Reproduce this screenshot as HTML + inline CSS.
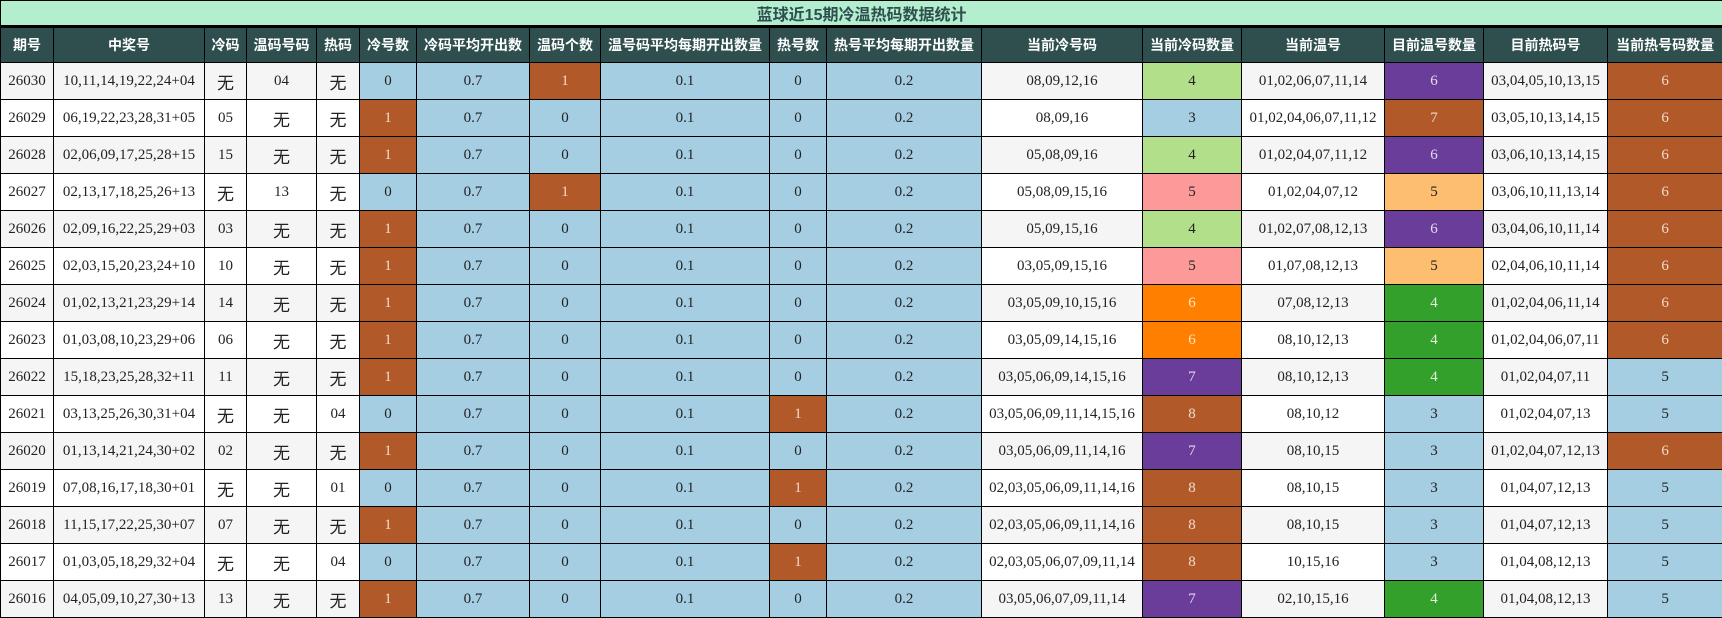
<!DOCTYPE html>
<html><head><meta charset="utf-8"><style>
*{margin:0;padding:0;box-sizing:border-box}
body{width:1722px;height:617px;background:#fff;overflow:hidden}
table{border-collapse:collapse;table-layout:fixed;width:1722px;font-family:"Liberation Serif","Noto Serif CJK SC",serif;font-size:15px;color:#222}
td,th{border:1.5px solid #000;text-align:center;white-space:nowrap;overflow:hidden}
.t td{height:25px;background:#b3eecf;color:#2f4f4f;font-weight:bold;font-family:"Liberation Sans","Noto Sans CJK SC",sans-serif;font-size:16px;border-bottom:3px solid #000}
th{height:36px;background:#2f4f4f;color:#fff;font-family:"Liberation Sans","Noto Sans CJK SC",sans-serif;font-size:14px;font-weight:bold}
tr.r td{height:37px}
tr.r:nth-child(odd) td{background:#f5f5f5}
tr.r:nth-child(even) td{background:#fff}
tr.r td.b{background:#a6cee3}
tr.r td.o{background:#b15928;color:#f3dcd0}
tr.r td.g{background:#b2df8a}
tr.r td.p{background:#6a3d9a;color:#e6dcf0}
tr.r td.k{background:#fb9a99}
tr.r td.l{background:#fdbf6f}
tr.r td.n{background:#ff7f00;color:#fde3c8}
tr.r td.G{background:#33a02c;color:#e0f2dc}
.w{font-family:"Noto Sans CJK SC",sans-serif;font-size:17px}
</style></head><body>
<table>
<colgroup><col style="width:53px"><col style="width:151px"><col style="width:42px"><col style="width:70px"><col style="width:43px"><col style="width:57px"><col style="width:113px"><col style="width:71px"><col style="width:169px"><col style="width:57px"><col style="width:155px"><col style="width:161px"><col style="width:99px"><col style="width:143px"><col style="width:99px"><col style="width:124px"><col style="width:115px"></colgroup>
<tbody>
<tr class="t"><td colspan="17">蓝球近15期冷温热码数据统计</td></tr>
<tr><th>期号</th><th>中奖号</th><th>冷码</th><th>温码号码</th><th>热码</th><th>冷号数</th><th>冷码平均开出数</th><th>温码个数</th><th>温号码平均每期开出数量</th><th>热号数</th><th>热号平均每期开出数量</th><th>当前冷号码</th><th>当前冷码数量</th><th>当前温号</th><th>目前温号数量</th><th>目前热码号</th><th>当前热号码数量</th></tr>
<tr class="r"><td>26030</td><td>10,11,14,19,22,24+04</td><td class="w">无</td><td>04</td><td class="w">无</td><td class="b">0</td><td class="b">0.7</td><td class="o">1</td><td class="b">0.1</td><td class="b">0</td><td class="b">0.2</td><td>08,09,12,16</td><td class="g">4</td><td>01,02,06,07,11,14</td><td class="p">6</td><td>03,04,05,10,13,15</td><td class="o">6</td></tr>
<tr class="r"><td>26029</td><td>06,19,22,23,28,31+05</td><td>05</td><td class="w">无</td><td class="w">无</td><td class="o">1</td><td class="b">0.7</td><td class="b">0</td><td class="b">0.1</td><td class="b">0</td><td class="b">0.2</td><td>08,09,16</td><td class="b">3</td><td>01,02,04,06,07,11,12</td><td class="o">7</td><td>03,05,10,13,14,15</td><td class="o">6</td></tr>
<tr class="r"><td>26028</td><td>02,06,09,17,25,28+15</td><td>15</td><td class="w">无</td><td class="w">无</td><td class="o">1</td><td class="b">0.7</td><td class="b">0</td><td class="b">0.1</td><td class="b">0</td><td class="b">0.2</td><td>05,08,09,16</td><td class="g">4</td><td>01,02,04,07,11,12</td><td class="p">6</td><td>03,06,10,13,14,15</td><td class="o">6</td></tr>
<tr class="r"><td>26027</td><td>02,13,17,18,25,26+13</td><td class="w">无</td><td>13</td><td class="w">无</td><td class="b">0</td><td class="b">0.7</td><td class="o">1</td><td class="b">0.1</td><td class="b">0</td><td class="b">0.2</td><td>05,08,09,15,16</td><td class="k">5</td><td>01,02,04,07,12</td><td class="l">5</td><td>03,06,10,11,13,14</td><td class="o">6</td></tr>
<tr class="r"><td>26026</td><td>02,09,16,22,25,29+03</td><td>03</td><td class="w">无</td><td class="w">无</td><td class="o">1</td><td class="b">0.7</td><td class="b">0</td><td class="b">0.1</td><td class="b">0</td><td class="b">0.2</td><td>05,09,15,16</td><td class="g">4</td><td>01,02,07,08,12,13</td><td class="p">6</td><td>03,04,06,10,11,14</td><td class="o">6</td></tr>
<tr class="r"><td>26025</td><td>02,03,15,20,23,24+10</td><td>10</td><td class="w">无</td><td class="w">无</td><td class="o">1</td><td class="b">0.7</td><td class="b">0</td><td class="b">0.1</td><td class="b">0</td><td class="b">0.2</td><td>03,05,09,15,16</td><td class="k">5</td><td>01,07,08,12,13</td><td class="l">5</td><td>02,04,06,10,11,14</td><td class="o">6</td></tr>
<tr class="r"><td>26024</td><td>01,02,13,21,23,29+14</td><td>14</td><td class="w">无</td><td class="w">无</td><td class="o">1</td><td class="b">0.7</td><td class="b">0</td><td class="b">0.1</td><td class="b">0</td><td class="b">0.2</td><td>03,05,09,10,15,16</td><td class="n">6</td><td>07,08,12,13</td><td class="G">4</td><td>01,02,04,06,11,14</td><td class="o">6</td></tr>
<tr class="r"><td>26023</td><td>01,03,08,10,23,29+06</td><td>06</td><td class="w">无</td><td class="w">无</td><td class="o">1</td><td class="b">0.7</td><td class="b">0</td><td class="b">0.1</td><td class="b">0</td><td class="b">0.2</td><td>03,05,09,14,15,16</td><td class="n">6</td><td>08,10,12,13</td><td class="G">4</td><td>01,02,04,06,07,11</td><td class="o">6</td></tr>
<tr class="r"><td>26022</td><td>15,18,23,25,28,32+11</td><td>11</td><td class="w">无</td><td class="w">无</td><td class="o">1</td><td class="b">0.7</td><td class="b">0</td><td class="b">0.1</td><td class="b">0</td><td class="b">0.2</td><td>03,05,06,09,14,15,16</td><td class="p">7</td><td>08,10,12,13</td><td class="G">4</td><td>01,02,04,07,11</td><td class="b">5</td></tr>
<tr class="r"><td>26021</td><td>03,13,25,26,30,31+04</td><td class="w">无</td><td class="w">无</td><td>04</td><td class="b">0</td><td class="b">0.7</td><td class="b">0</td><td class="b">0.1</td><td class="o">1</td><td class="b">0.2</td><td>03,05,06,09,11,14,15,16</td><td class="o">8</td><td>08,10,12</td><td class="b">3</td><td>01,02,04,07,13</td><td class="b">5</td></tr>
<tr class="r"><td>26020</td><td>01,13,14,21,24,30+02</td><td>02</td><td class="w">无</td><td class="w">无</td><td class="o">1</td><td class="b">0.7</td><td class="b">0</td><td class="b">0.1</td><td class="b">0</td><td class="b">0.2</td><td>03,05,06,09,11,14,16</td><td class="p">7</td><td>08,10,15</td><td class="b">3</td><td>01,02,04,07,12,13</td><td class="o">6</td></tr>
<tr class="r"><td>26019</td><td>07,08,16,17,18,30+01</td><td class="w">无</td><td class="w">无</td><td>01</td><td class="b">0</td><td class="b">0.7</td><td class="b">0</td><td class="b">0.1</td><td class="o">1</td><td class="b">0.2</td><td>02,03,05,06,09,11,14,16</td><td class="o">8</td><td>08,10,15</td><td class="b">3</td><td>01,04,07,12,13</td><td class="b">5</td></tr>
<tr class="r"><td>26018</td><td>11,15,17,22,25,30+07</td><td>07</td><td class="w">无</td><td class="w">无</td><td class="o">1</td><td class="b">0.7</td><td class="b">0</td><td class="b">0.1</td><td class="b">0</td><td class="b">0.2</td><td>02,03,05,06,09,11,14,16</td><td class="o">8</td><td>08,10,15</td><td class="b">3</td><td>01,04,07,12,13</td><td class="b">5</td></tr>
<tr class="r"><td>26017</td><td>01,03,05,18,29,32+04</td><td class="w">无</td><td class="w">无</td><td>04</td><td class="b">0</td><td class="b">0.7</td><td class="b">0</td><td class="b">0.1</td><td class="o">1</td><td class="b">0.2</td><td>02,03,05,06,07,09,11,14</td><td class="o">8</td><td>10,15,16</td><td class="b">3</td><td>01,04,08,12,13</td><td class="b">5</td></tr>
<tr class="r"><td>26016</td><td>04,05,09,10,27,30+13</td><td>13</td><td class="w">无</td><td class="w">无</td><td class="o">1</td><td class="b">0.7</td><td class="b">0</td><td class="b">0.1</td><td class="b">0</td><td class="b">0.2</td><td>03,05,06,07,09,11,14</td><td class="p">7</td><td>02,10,15,16</td><td class="G">4</td><td>01,04,08,12,13</td><td class="b">5</td></tr>
</tbody></table>
</body></html>
